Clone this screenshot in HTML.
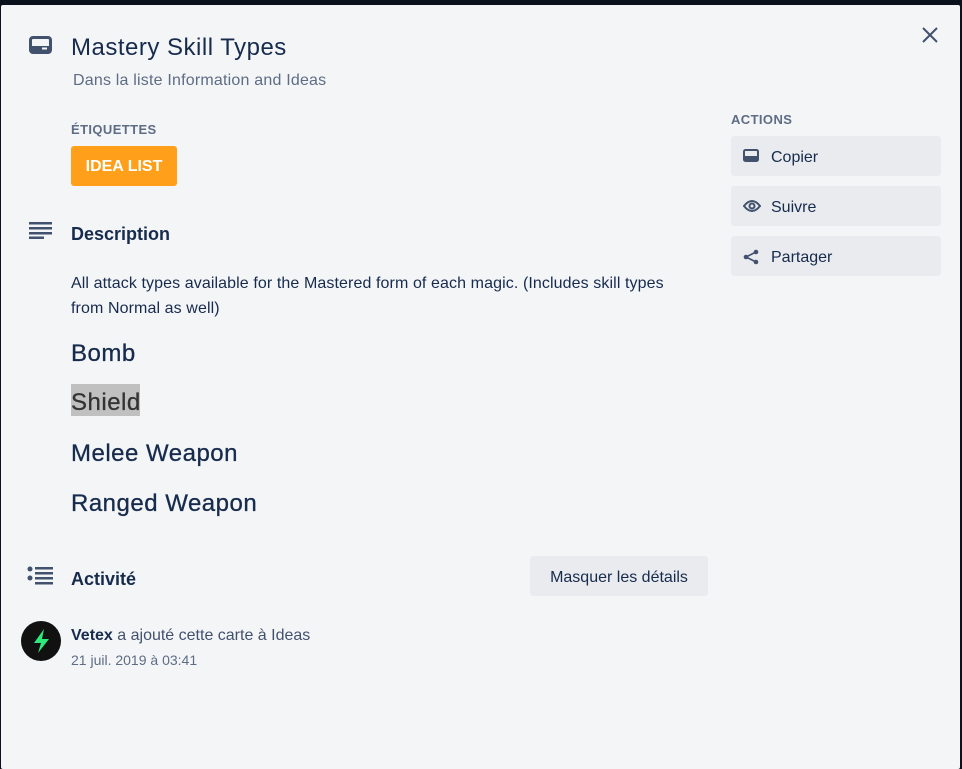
<!DOCTYPE html>
<html><head><meta charset="utf-8"><style>
*{margin:0;padding:0;box-sizing:border-box}
body{width:962px;height:769px;background:#0b111d;position:relative;overflow:hidden;font-family:"Liberation Sans",sans-serif;color:#172b4d}
#p{position:absolute;left:1px;top:5px;width:959px;height:764px;background:#f4f5f7;border-radius:2px}
.a{position:absolute;white-space:nowrap}
.btn{position:absolute;left:731px;width:210px;height:40px;background:#e9ebee;border-radius:3px;font-size:16px;color:#172b4d}
.btn span{position:absolute;left:40px;top:13px}
.btn svg{position:absolute;left:12px;top:13px}
h2{font-size:24px;font-weight:normal;position:absolute;left:71px;letter-spacing:.5px;-webkit-text-stroke:.3px #172b4d}
</style></head><body>
<div id="p"></div>
<svg class="a" style="left:29px;top:36px" width="23" height="18" viewBox="0 0 23 18"><rect x="1.5" y="1.5" width="20" height="15" rx="2.5" fill="none" stroke="#42526e" stroke-width="3"/><rect x="2" y="10" width="19" height="6" fill="#42526e"/><rect x="13" y="11.5" width="5" height="2" fill="#f4f5f7"/></svg>
<div class="a" style="left:71px;top:34px;font-size:24px;letter-spacing:.5px">Mastery Skill Types</div>
<div class="a" style="left:73px;top:72px;font-size:16px;color:#5e6c84;letter-spacing:.2px">Dans la liste Information and Ideas</div>
<div class="a" style="left:71px;top:122px;font-size:13px;font-weight:bold;color:#5e6c84;letter-spacing:.4px">ÉTIQUETTES</div>
<div class="a" style="left:71px;top:146px;width:106px;height:40px;background:#ff9f1a;border-radius:3px;color:#fff;font-weight:bold;font-size:16px;line-height:42px;text-align:center">IDEA LIST</div>
<svg class="a" style="left:29px;top:222px" width="23" height="17"><g fill="#42526e"><rect y="0" width="23" height="2.5"/><rect y="5" width="23" height="2.5"/><rect y="10" width="23" height="2.5"/><rect y="14.5" width="15" height="2.5"/></g></svg>
<div class="a" style="left:71px;top:224px;font-size:18px;font-weight:bold">Description</div>
<div class="a" style="left:71px;top:271px;font-size:16px;line-height:25px;white-space:normal;width:625px;letter-spacing:.1px">All attack types available for the Mastered form of each magic. (Includes skill types from Normal as well)</div>
<h2 style="top:340px">Bomb</h2>
<div class="a" style="left:71px;top:384px;width:69px;height:32px;background:#c0c0c0"></div>
<h2 style="top:389px;color:#333;-webkit-text-stroke:.3px #333">Shield</h2>
<h2 style="top:440px">Melee Weapon</h2>
<h2 style="top:490px">Ranged Weapon</h2>
<svg class="a" style="left:27px;top:566px" width="27" height="20"><g fill="#42526e"><circle cx="3" cy="3" r="2.5"/><circle cx="3" cy="12" r="2.5"/><rect x="8" y="1" width="18" height="2.5"/><rect x="8" y="6" width="18" height="2.5"/><rect x="8" y="11" width="18" height="2.5"/><rect x="8" y="16" width="18" height="2.5"/></g></svg>
<div class="a" style="left:71px;top:569px;font-size:18px;font-weight:bold">Activité</div>
<div class="a" style="left:530px;top:556px;width:178px;height:40px;background:#e9ebee;border-radius:3px;font-size:16px;line-height:44px;text-align:center">Masquer les détails</div>
<div class="a" style="left:21px;top:621px;width:40px;height:40px;border-radius:50%;background:#111"></div>
<svg class="a" style="left:21px;top:621px" width="40" height="40"><path d="M23 8 L13 22 L20 22 L17 32 L28 18 L21 18 Z" fill="#2ee87a"/></svg>
<div class="a" style="left:71px;top:627px;font-size:16px"><b>Vetex</b> <span style="color:#42526e">a ajouté cette carte à Ideas</span></div>
<div class="a" style="left:71px;top:652px;font-size:14px;color:#5e6c84">21 juil. 2019 à 03:41</div>
<div class="a" style="left:731px;top:112px;font-size:13px;font-weight:bold;color:#5e6c84;letter-spacing:.4px">ACTIONS</div>
<div class="btn" style="top:136px"><svg width="16" height="13" viewBox="0 0 16 13"><rect x="1" y="1" width="14" height="11" rx="1.5" fill="none" stroke="#42526e" stroke-width="2"/><rect x="1" y="7" width="14" height="5" fill="#42526e"/></svg><span>Copier</span></div>
<div class="btn" style="top:186px"><svg width="18" height="14" viewBox="0 0 18 14"><path d="M1 7 Q9 -3 17 7 Q9 17 1 7Z" fill="none" stroke="#42526e" stroke-width="2"/><circle cx="9" cy="7" r="2.5" fill="none" stroke="#42526e" stroke-width="2"/></svg><span>Suivre</span></div>
<div class="btn" style="top:236px"><svg width="16" height="16" viewBox="0 0 16 16"><path d="M13 3 L3 8 L13 13" fill="none" stroke="#42526e" stroke-width="1.6"/><circle cx="13" cy="3" r="2.3" fill="#42526e"/><circle cx="3" cy="8" r="2.3" fill="#42526e"/><circle cx="13" cy="13" r="2.3" fill="#42526e"/></svg><span>Partager</span></div>
<svg class="a" style="left:922px;top:27px" width="16" height="16"><path d="M1 1L15 15M15 1L1 15" stroke="#42526e" stroke-width="2"/></svg>
</body></html>
